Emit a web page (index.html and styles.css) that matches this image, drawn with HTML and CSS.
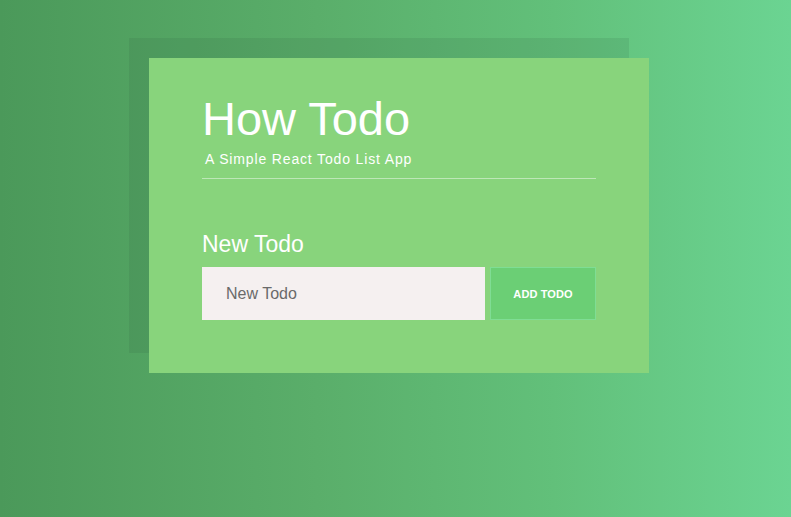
FILE: index.html
```html
<!DOCTYPE html>
<html>
<head>
<meta charset="utf-8">
<link rel="stylesheet" href="styles.css">
</head>
<body>
<div class="page">
  <div class="card">
    <header class="head">
      <h1 class="title">How Todo</h1>
      <p class="subtitle">A Simple React Todo List App</p>
    </header>
    <form class="new-todo">
      <label class="label" for="todo">New Todo</label>
      <div class="row">
        <input id="todo" class="input" type="text" placeholder="New Todo">
        <button type="button" class="btn">ADD TODO</button>
      </div>
    </form>
  </div>
</div>
</body>
</html>
```
FILE: styles.css
```css
html, body {
  margin: 0;
  padding: 0;
  height: 100%;
}
body {
  background: linear-gradient(to right, #4b995a 0%, #5aae6a 40%, #62c07a 70%, #6bd492 100%);
  font-family: "Liberation Sans", Arial, sans-serif;
  color: #fff;
}
.page {
  padding-top: 58px;
  padding-left: 149px;
}
.card {
  height: 315px;
  box-sizing: border-box;
  padding: 34px 53px 0 53px;
  width: 500px;
  background: #88d47c;
  box-shadow: -20px -20px 0 rgba(40, 80, 60, 0.12);
}
.head {
  border-bottom: 1px solid rgba(255, 255, 255, 0.45);
  padding-bottom: 11px;
}
.title {
  margin: 0;
  font-weight: normal;
  font-size: 47px;
  line-height: 54px;
}
.subtitle {
  margin: 5px 0 0 3px;
  font-size: 14px;
  line-height: 16px;
  letter-spacing: 0.85px;
}
.new-todo {
  margin-top: 52px;
}
.label {
  display: block;
  font-size: 23px;
  line-height: 27px;
  margin-bottom: 9px;
}
.row {
  display: flex;
  gap: 5px;
}
.input {
  width: 283px;
  height: 53px;
  box-sizing: border-box;
  border: none;
  background: #f5f0f0;
  padding: 0 24px;
  font-family: "Liberation Sans", Arial, sans-serif;
  font-size: 16px;
  color: #333;
  outline: none;
}
.input::placeholder {
  color: #6a6a6a;
}
.btn {
  width: 106px;
  height: 53px;
  box-sizing: border-box;
  background: #6bcf75;
  border: 1px solid #7fdd94;
  color: #fff;
  font-family: "Liberation Sans", Arial, sans-serif;
  font-weight: bold;
  font-size: 11px;
  letter-spacing: 0.1px;
  padding: 0;
}
```
